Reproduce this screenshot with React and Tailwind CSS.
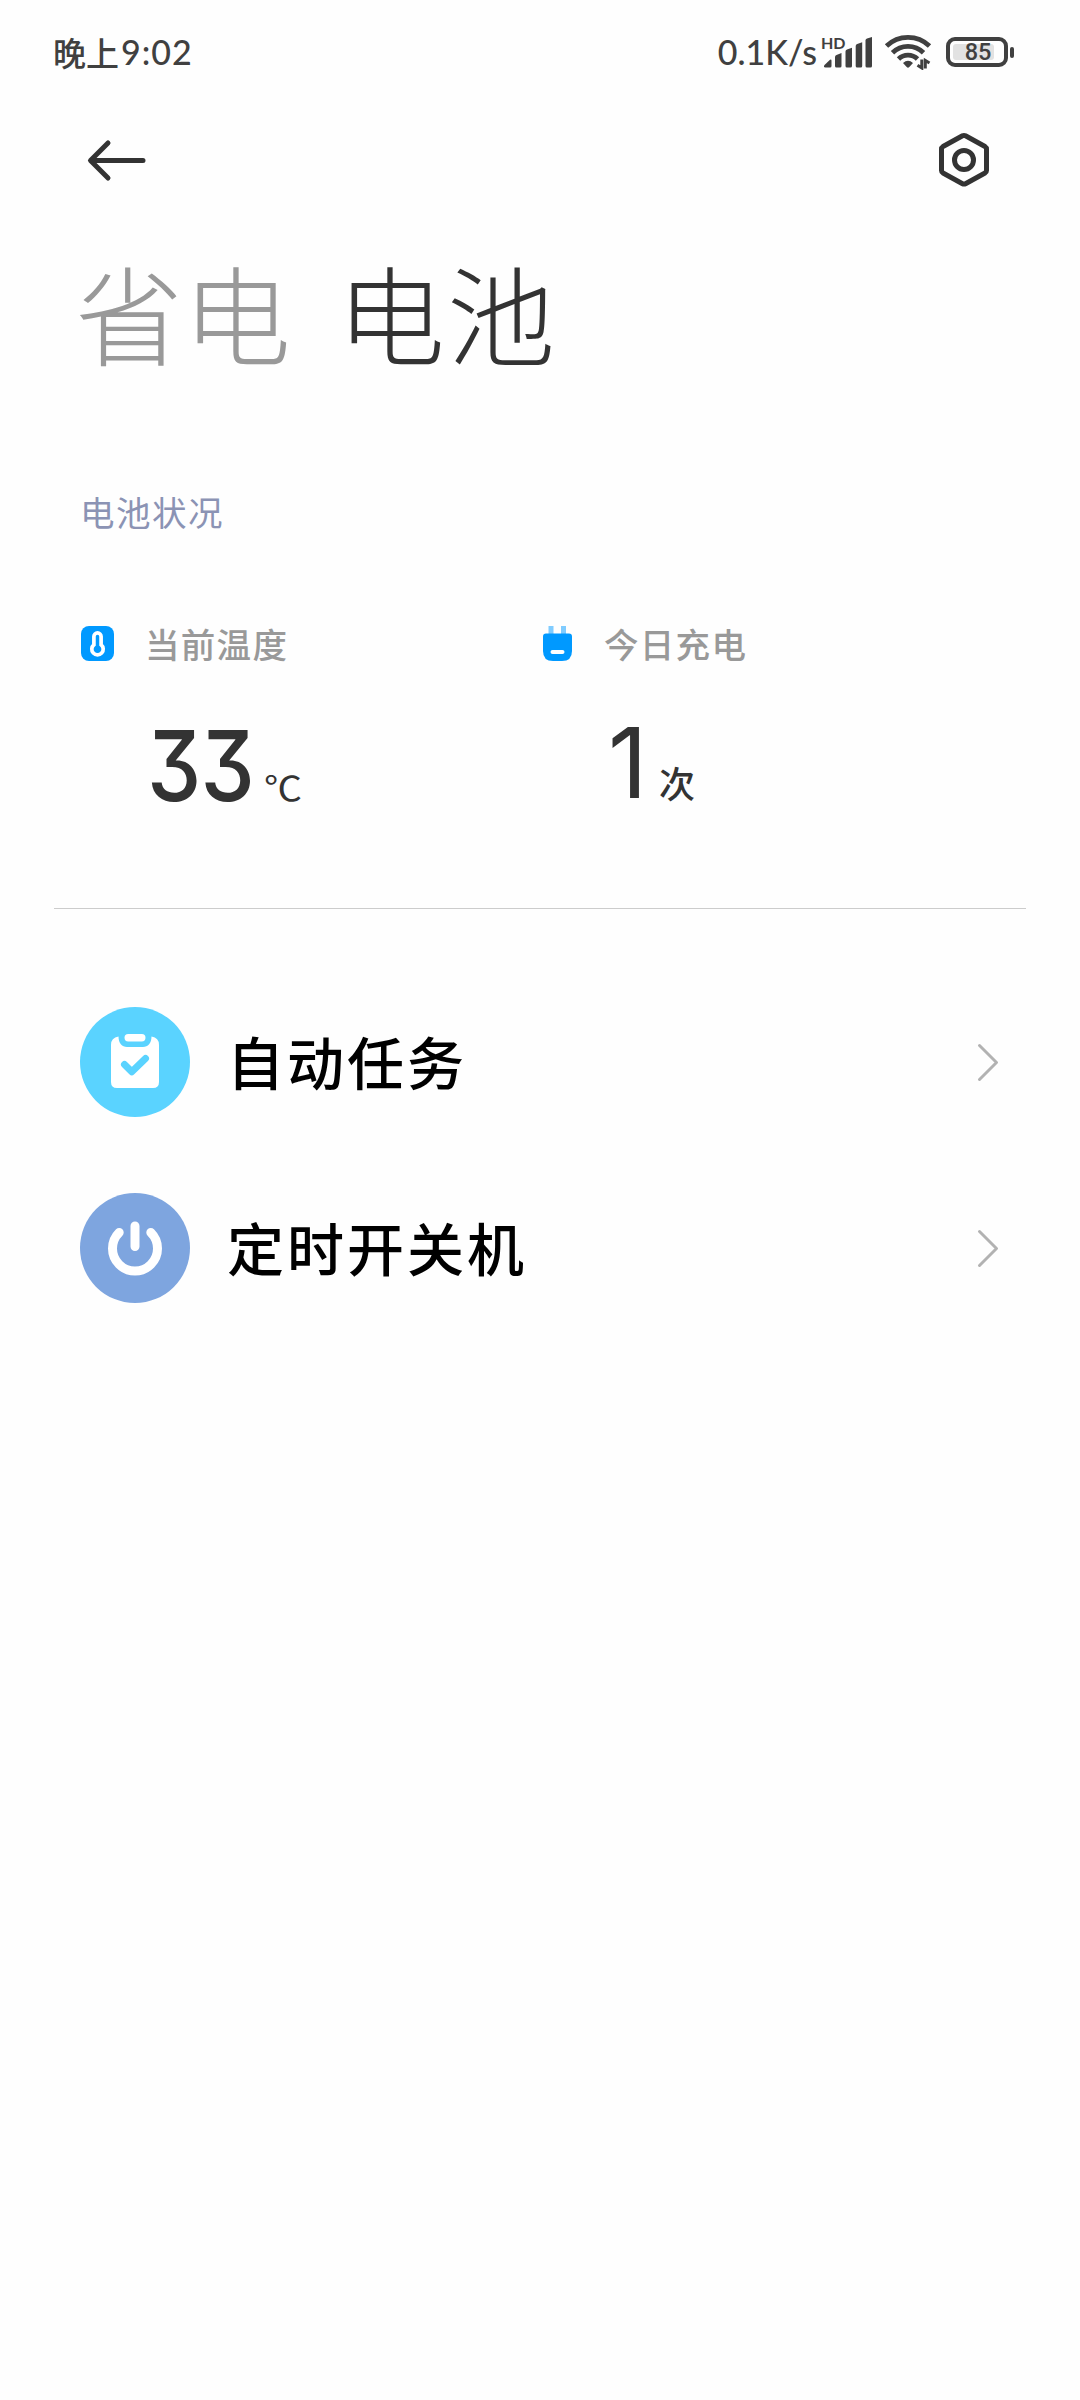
import React from 'react'

function SignalIcon() {
  return (
    <svg className="w-[50px] h-[34px]" viewBox="0 0 50 34" fill="#404040">
      <path d="M1.500 30 7 24.800Q8.500 24 8.500 26V31q0 1.500-1.500 1.500H2.500Q0 32.500 1.500 30Z" />
      <path d="M12 22Q12 20.500 13.500 20L18.500 18V31q0 1.500-1.500 1.500H13.500q-1.500 0-1.500-1.500Z" />
      <path d="M22.500 16.500Q22.500 15 24 14.500L29 12.700V31q0 1.500-1.500 1.500H24q-1.500 0-1.500-1.500Z" />
      <path d="M32.700 11Q32.700 9.500 34.200 9L39.200 7.200V31q0 1.500-1.500 1.500H34.200q-1.500 0-1.500-1.500Z" />
      <path d="M42.500 5.500Q42.500 4 44 3.500L49 2V31q0 1.500-1.500 1.500H44q-1.500 0-1.500-1.500Z" />
    </svg>
  )
}

function WifiIcon() {
  return (
    <svg className="w-[48px] h-[36px]" viewBox="0 0 48 36" fill="none" stroke="#404040" strokeWidth="4.8">
      <path d="M2.500 12A31 31 0 0 1 45.500 12" />
      <path d="M8.500 18.800A22 22 0 0 1 39.500 18.800" />
      <path d="M14.500 25A13.500 13.500 0 0 1 33.500 25" />
      <path d="M19 29Q24 24.500 29 29L25.300 33Q24 34.500 22.700 33Z" fill="#404040" stroke="none" />
      <path d="M37.800 25.500V34L33.500 31.300M41.300 34.500V26.500L45.500 29" strokeWidth="3" />
    </svg>
  )
}

function BatteryIcon() {
  return (
    <div className="flex items-center gap-[2px]">
      <div className="relative w-[62px] h-[30px] rounded-[9px] border-4 border-[#404040] p-[3px]">
        <div className="w-[41px] h-4 rounded-[3px] bg-[#e2e2e2]" />
        <span className="absolute inset-0 flex items-center justify-center pt-px pl-[2px] text-[23.5px] leading-none font-medium font-[Roboto,sans-serif]">
          85
        </span>
      </div>
      <div className="w-1 h-[11px] rounded-[2px] bg-[#404040]" />
    </div>
  )
}

function StatusBar() {
  return (
    <div className="flex h-[104px] items-center justify-between pl-[53px] pr-[66px] text-[#404040]">
      <div className="flex items-center text-[33px] leading-none font-medium">
        <span>晚上</span>
        <span className="ml-[2px] font-[Lato,sans-serif] text-[34px] tracking-[1px]">9:02</span>
      </div>
      <div className="flex items-center">
        <span className="font-[Lato,sans-serif] text-[34px] leading-none font-medium">0.1K/s</span>
        <div className="relative ml-[6px]">
          <SignalIcon />
          <span className="absolute -left-[2px] top-0 font-[Lato,sans-serif] text-[16px] leading-none font-bold">HD</span>
        </div>
        <div className="ml-[11px]">
          <WifiIcon />
        </div>
        <div className="ml-[14px]">
          <BatteryIcon />
        </div>
      </div>
    </div>
  )
}

function Header() {
  return (
    <div className="flex h-[112px] items-center justify-between pl-[86px] pr-[89px]">
      <svg className="w-[62px] h-[44px]" viewBox="0 0 62 44" fill="none" stroke="#333" strokeWidth="5" strokeLinecap="round" strokeLinejoin="round">
        <path d="M57 22.500H5M22 5 4.500 22.500 22 40" />
      </svg>
      <svg className="w-[54px] h-[58px]" viewBox="0 0 54 58" fill="none" stroke="#333" strokeWidth="5" strokeLinejoin="round">
        <path d="M25.500 4.800Q27 4 28.500 4.800L48 15.500Q49.500 16.500 49.500 18V39.500Q49.500 41 48 42L28.500 52.700Q27 53.500 25.500 52.700L6 42Q4.500 41 4.500 39.500V18Q4.500 16.500 6 15.500Z" />
        <circle cx="27" cy="29" r="9.500" />
      </svg>
    </div>
  )
}

function ThermometerIcon() {
  return (
    <svg className="w-[33px] h-[35px]" viewBox="0 0 33 35">
      <rect width="33" height="35" rx="8" fill="#0099ff" />
      <path d="M12.900 18.800V10.500a3.600 3.600 0 0 1 7.200 0V18.800a5.700 5.700 0 1 1-7.200 0Z" fill="none" stroke="#fff" strokeWidth="3.700" />
    </svg>
  )
}

function PlugIcon() {
  return (
    <svg className="w-[29px] h-[35px]" viewBox="0 0 29 35">
      <path d="M5.500 0h5v8h-5zM18 0h5v8h-5z" fill="#80ccff" />
      <path d="M0 10.500Q0 7.500 3 7.500H26Q29 7.500 29 10.500V25Q29 35 19 35H10Q0 35 0 25Z" fill="#0099ff" />
      <rect x="7.500" y="24" width="14" height="4" rx="2" fill="#fff" />
    </svg>
  )
}

function TaskIcon() {
  return (
    <svg className="w-[110px] h-[110px]" viewBox="0 0 110 110">
      <circle cx="55" cy="55" r="55" fill="#5ad3ff" />
      <path d="M38.500 29.500C38.500 36 42 40 47 40H63C68 40 71.500 36 71.500 29.500Q79 30.500 79 38V75Q79 81 73 81H37Q31 81 31 75V38Q31 30.500 38.500 29.500Z" fill="#fff" />
      <rect x="44.500" y="27" width="21" height="7.500" rx="3.700" fill="#fff" />
      <path d="M44.500 57.500 51.800 64.800 65.500 51.500" fill="none" stroke="#5ad3ff" strokeWidth="7" strokeLinecap="round" strokeLinejoin="round" />
    </svg>
  )
}

function PowerIcon() {
  return (
    <svg className="w-[110px] h-[110px]" viewBox="0 0 110 110" fill="none" stroke="#fff" strokeWidth="9" strokeLinecap="round">
      <circle cx="55" cy="55" r="55" fill="#7ea5df" stroke="none" />
      <path d="M39.200 39.500A22.500 22.500 0 1 0 70.800 39.500M55 33V53.500" />
    </svg>
  )
}

const tasks = [
  { label: '自动任务', icon: TaskIcon },
  { label: '定时开关机', icon: PowerIcon },
]

export default function App() {
  return (
    <div className="w-[1080px] h-[2400px] overflow-hidden bg-[#fefefe] font-['Noto_Sans_CJK_SC',sans-serif]">
      <StatusBar />
      <Header />

      {/* Page tabs */}
      <div className="flex h-[202px] items-center gap-[46px] pb-[12px] pl-[75px] text-[108px] leading-none font-light">
        <span className="text-[#999]">省电</span>
        <span className="tracking-[2px] text-[#333]">电池</span>
      </div>

      <h2 className="h-[186px] pt-[76px] pl-[80px] text-[34.5px] leading-[34px] tracking-[1.5px] text-[#8b93b4]">电池状况</h2>

      <div className="flex h-[304px] pl-[81px]">
        <div className="w-[462px] pt-[22px]">
          <div className="flex items-center gap-[31px] text-[34.5px] leading-[35px] font-medium tracking-[1.3px] text-[#999]">
            <ThermometerIcon />
            当前温度
          </div>
          <div className="flex items-baseline pt-[56px] pl-[66px] text-[#333]">
            <span className="w-[117px] origin-left scale-x-[0.89] font-[Inter,sans-serif] text-[97px] leading-[97px] tracking-[-1px] font-medium [font-feature-settings:'cv09']">33</span>
            <span className="origin-left scale-x-[1.12] text-[34px] leading-none">℃</span>
          </div>
        </div>
        <div className="pt-[22px]">
          <div className="flex items-center gap-8 text-[34.5px] leading-[35px] font-medium tracking-[1.3px] text-[#999]">
            <PlugIcon />
            今日充电
          </div>
          <div className="flex items-baseline pt-[53px] pl-[65px] text-[#333]">
            <span className="w-[51px] font-[Inter,sans-serif] text-[97px] leading-[97px]">1</span>
            <span className="text-[36px] leading-none font-medium">次</span>
          </div>
        </div>
      </div>

      <div className="mx-[54px] h-px bg-[#ccc]" />

      <div className="pt-[60px]">
        {tasks.map(({ label, icon: Icon }) => (
          <div key={label} className="flex h-[186px] items-center pl-[80px] pr-[80px]">
            <Icon />
            <span className="ml-[37px] flex-1 pb-[3px] text-[57px] leading-none font-medium tracking-[3px] text-black">{label}</span>
            <svg className="w-[24px] h-[40px]" viewBox="0 0 24 40" fill="none" stroke="#b2b2b2" strokeWidth="3" strokeLinecap="round" strokeLinejoin="round">
              <path d="M3.500 3.500 20.500 20.500 3.500 37.500" />
            </svg>
          </div>
        ))}
      </div>
    </div>
  )
}
